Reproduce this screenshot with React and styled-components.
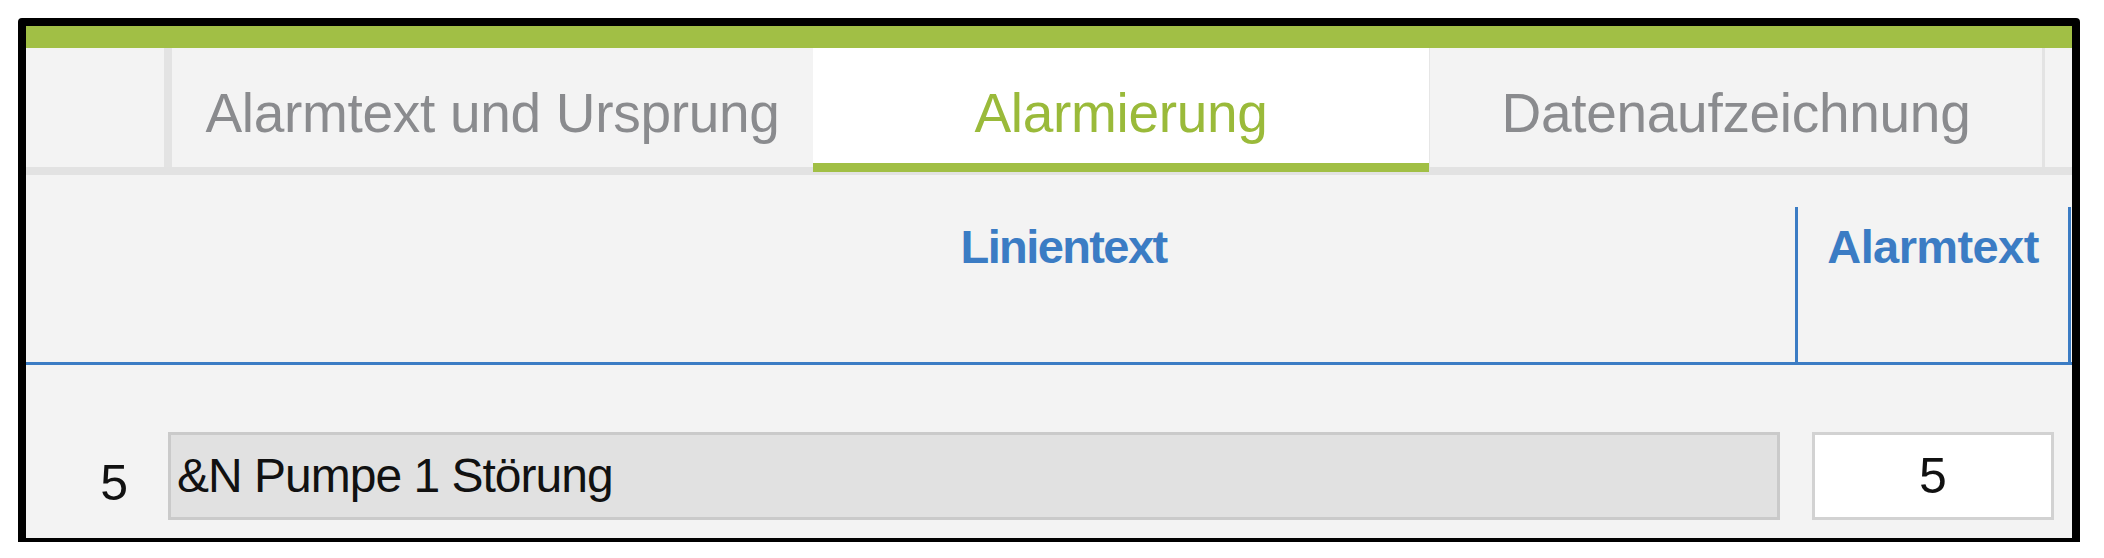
import React from 'react';
import styled, { createGlobalStyle } from 'styled-components';

// colours of the alarm editor
const green = '#a1bf45';
const blue = '#3b7cc4';
const panel = '#f3f3f3';

const GlobalStyle = createGlobalStyle`
    html, body{
        margin: 0;
        background: #ffffff;
        font-family: "Liberation Sans", Arial, sans-serif;
    }
`;

const tabs = [
    { label: 'Alarmtext und Ursprung', width: 649, first: true },
    { label: 'Alarmierung', width: 616, active: true },
    { label: 'Datenaufzeichnung', width: 616, last: true },
];

const rows = [
    { line: 5, text: '&N Pumpe 1 Störung', alarm: 5 },
];

export default function App() {
    return (
        <>
            <GlobalStyle />
            <Page>
                <Frame>
                    <GreenBar />
                    <TabStrip>
                        <TabSpacer />
                        {
                            tabs.map((tab) => (
                                <Tab
                                    key={tab.label}
                                    $width={tab.width}
                                    $active={tab.active}
                                    $first={tab.first}
                                    $last={tab.last}
                                >
                                    {tab.label}
                                </Tab>
                            ))
                        }
                    </TabStrip>
                    <Header>
                        <HeaderCell />
                        <HeaderCell $spacing={-1.6}>Linientext</HeaderCell>
                        <HeaderCell $divider $spacing={-0.6}>Alarmtext</HeaderCell>
                        <HeaderCell $divider />
                    </Header>
                    <Rows>
                        {
                            rows.map((row) => (
                                <Row key={row.line}>
                                    <LineNumber>{row.line}</LineNumber>
                                    <TextField>{row.text}</TextField>
                                    <ValueBox>{row.alarm}</ValueBox>
                                </Row>
                            ))
                        }
                    </Rows>
                </Frame>
            </Page>
        </>
    );
}

const Page = styled.div`
    padding: 18px 0 0 18px;
`;

const Frame = styled.div`
    width: 2062px;
    height: 524px;
    box-sizing: border-box;
    border: 8px solid #000;
    border-bottom-width: 4px;
    border-radius: 4px 4px 0 0;
    background: ${panel};
    display: flex;
    flex-direction: column;
    overflow: hidden;
`;

const GreenBar = styled.div`
    height: 22px;
    background: ${green};
    flex-shrink: 0;
`;

const TabStrip = styled.div`
    display: flex;
    height: 127px;
    box-sizing: border-box;
    border-bottom: 8px solid #e2e2e2;
    flex-shrink: 0;
`;

const TabSpacer = styled.div`
    width: 138px;
`;

const Tab = styled.div`
    width: ${(p) => p.$width}px;
    box-sizing: border-box;
    height: ${(p) => (p.$active ? '124px' : '119px')};
    padding-top: 38px;
    text-align: center;
    font-size: 55px;
    line-height: 55px;
    letter-spacing: -0.3px;
    color: ${(p) => (p.$active ? '#9aba3a' : '#8a8b8e')};
    background: ${(p) => (p.$active ? '#ffffff' : panel)};
    border-left: ${(p) => (p.$first ? '8px solid #e3e3e3' : p.$active ? 'none' : '1px solid #e6e6e6')};
    border-right: ${(p) => (p.$last ? '3px solid #e3e3e3' : 'none')};
    border-bottom: ${(p) => (p.$active ? `9px solid ${green}` : 'none')};
    white-space: nowrap;
`;

const Header = styled.div`
    display: grid;
    grid-template-columns: 306px 1463px 273px 4px;
    height: 190px;
    box-sizing: border-box;
    padding-top: 32px;
    border-bottom: 3px solid ${blue};
    flex-shrink: 0;
`;

const HeaderCell = styled.div`
    border-left: ${(p) => (p.$divider ? `3px solid ${blue}` : 'none')};
    padding-top: 16px;
    text-align: center;
    font-size: 47px;
    line-height: 47px;
    font-weight: bold;
    letter-spacing: ${(p) => p.$spacing || 0}px;
    color: ${blue};
`;

const Rows = styled.div`
    padding-top: 67px;
    display: flex;
    flex-direction: column;
`;

const Row = styled.div`
    display: flex;
    align-items: center;
    height: 88px;
`;

const LineNumber = styled.div`
    width: 142px;
    box-sizing: border-box;
    padding: 14px 40px 0 0;
    text-align: right;
    font-size: 50px;
    color: #111;
`;

const TextField = styled.div`
    width: 1612px;
    height: 88px;
    box-sizing: border-box;
    border: 3px solid #cacaca;
    background: #e1e1e1;
    padding: 0 0 2px 6px;
    display: flex;
    align-items: center;
    font-size: 48px;
    letter-spacing: -1px;
    color: #111;
    white-space: nowrap;
`;

const ValueBox = styled.div`
    width: 242px;
    height: 88px;
    margin-left: 32px;
    box-sizing: border-box;
    border: 3px solid #d2d2d2;
    background: #ffffff;
    display: flex;
    align-items: center;
    justify-content: center;
    font-size: 50px;
    color: #111;
`;
